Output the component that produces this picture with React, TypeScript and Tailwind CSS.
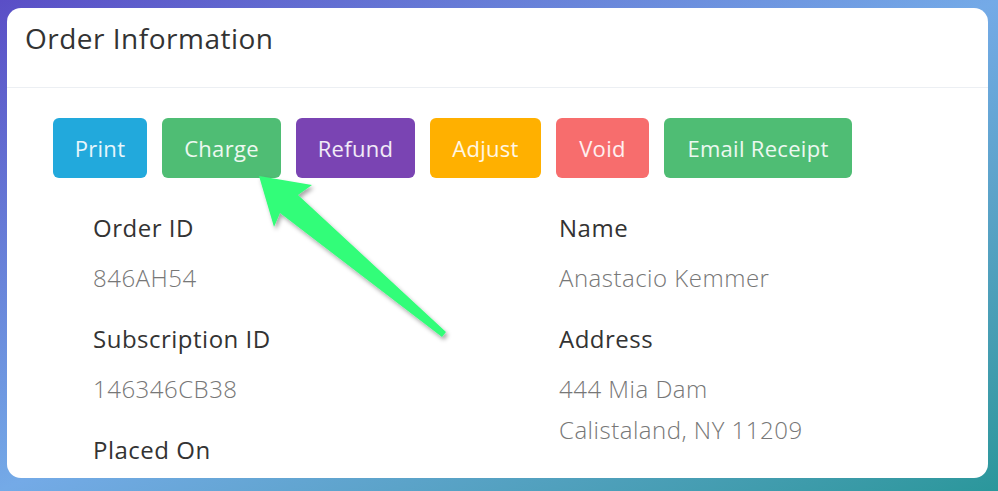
import React from "react";

const buttons = [
  { label: "Print", w: "w-[94px]", bg: "bg-[#22a9dc]" },
  { label: "Charge", w: "w-[119px]", bg: "bg-[#4fbd74]" },
  { label: "Refund", w: "w-[119px]", bg: "bg-[#7a44b3]" },
  { label: "Adjust", w: "w-[111px]", bg: "bg-[#ffb000]" },
  { label: "Void", w: "w-[93px]", bg: "bg-[#f76d6d]" },
  { label: "Email Receipt", w: "w-[188px]", bg: "bg-[#4fbd74]" },
];

function Field({ label, lines }: { label: string; lines: string[] }) {
  return (
    <div className="mb-[26px]">
      <div className="text-[24px] leading-[30px] font-medium tracking-[0.5px] text-[#333]">{label}</div>
      {lines.length > 0 && (
        <div className="mt-[14px] text-[24px] leading-[41px] font-light tracking-[0.5px] text-[#777]">
          {lines.map((l) => (
            <div key={l}>{l}</div>
          ))}
        </div>
      )}
    </div>
  );
}

export default function App() {
  return (
    <div
      className="relative w-[998px] h-[491px] overflow-hidden bg-linear-to-br from-[#5a4ec6] via-[#74aae7] to-[#2a979b] pt-[8px] pl-[7px] pr-[10px]"
      style={{ fontFamily: "'Open Sans', 'Noto Sans', sans-serif" }}
    >
      <div className="w-[981px] h-[470px] bg-white rounded-[14px] overflow-hidden flex flex-col">
        <div className="h-[80px] shrink-0 border-b border-[#eceff3] flex items-center pl-[18px] pb-[20px]">
          <span className="text-[28px] tracking-[0.5px] text-[#333] leading-none">Order Information</span>
        </div>
        <div className="shrink-0 pt-[30px] pl-[46px] flex gap-[15px]">
          {buttons.map((b) => (
            <div
              key={b.label}
              className={`${b.w} ${b.bg} h-[60px] rounded-[6px] flex items-center justify-center text-[22px] tracking-[0.3px] text-white/90`}
            >
              {b.label}
            </div>
          ))}
        </div>
        <div className="grid grid-cols-[466px_1fr] pl-[86px] pt-[35px]">
          <div>
            <Field label="Order ID" lines={["846AH54"]} />
            <Field label="Subscription ID" lines={["146346CB38"]} />
            <Field label="Placed On" lines={[]} />
          </div>
          <div>
            <Field label="Name" lines={["Anastacio Kemmer"]} />
            <Field label="Address" lines={["444 Mia Dam", "Calistaland, NY 11209"]} />
          </div>
        </div>
      </div>
      <svg
        className="absolute inset-0 pointer-events-none"
        width="998"
        height="491"
        viewBox="0 0 998 491"
      >
        <defs>
          <filter id="sh" x="-20%" y="-20%" width="140%" height="140%">
            <feDropShadow dx="2" dy="3" stdDeviation="2" floodColor="#000" floodOpacity="0.35" />
          </filter>
        </defs>
        <polygon
          points="259,176 312,185 298,195 446,332 442,337 280,213 274,227"
          fill="#33fd79"
          filter="url(#sh)"
          strokeLinejoin="round"
        />
      </svg>
    </div>
  );
}
